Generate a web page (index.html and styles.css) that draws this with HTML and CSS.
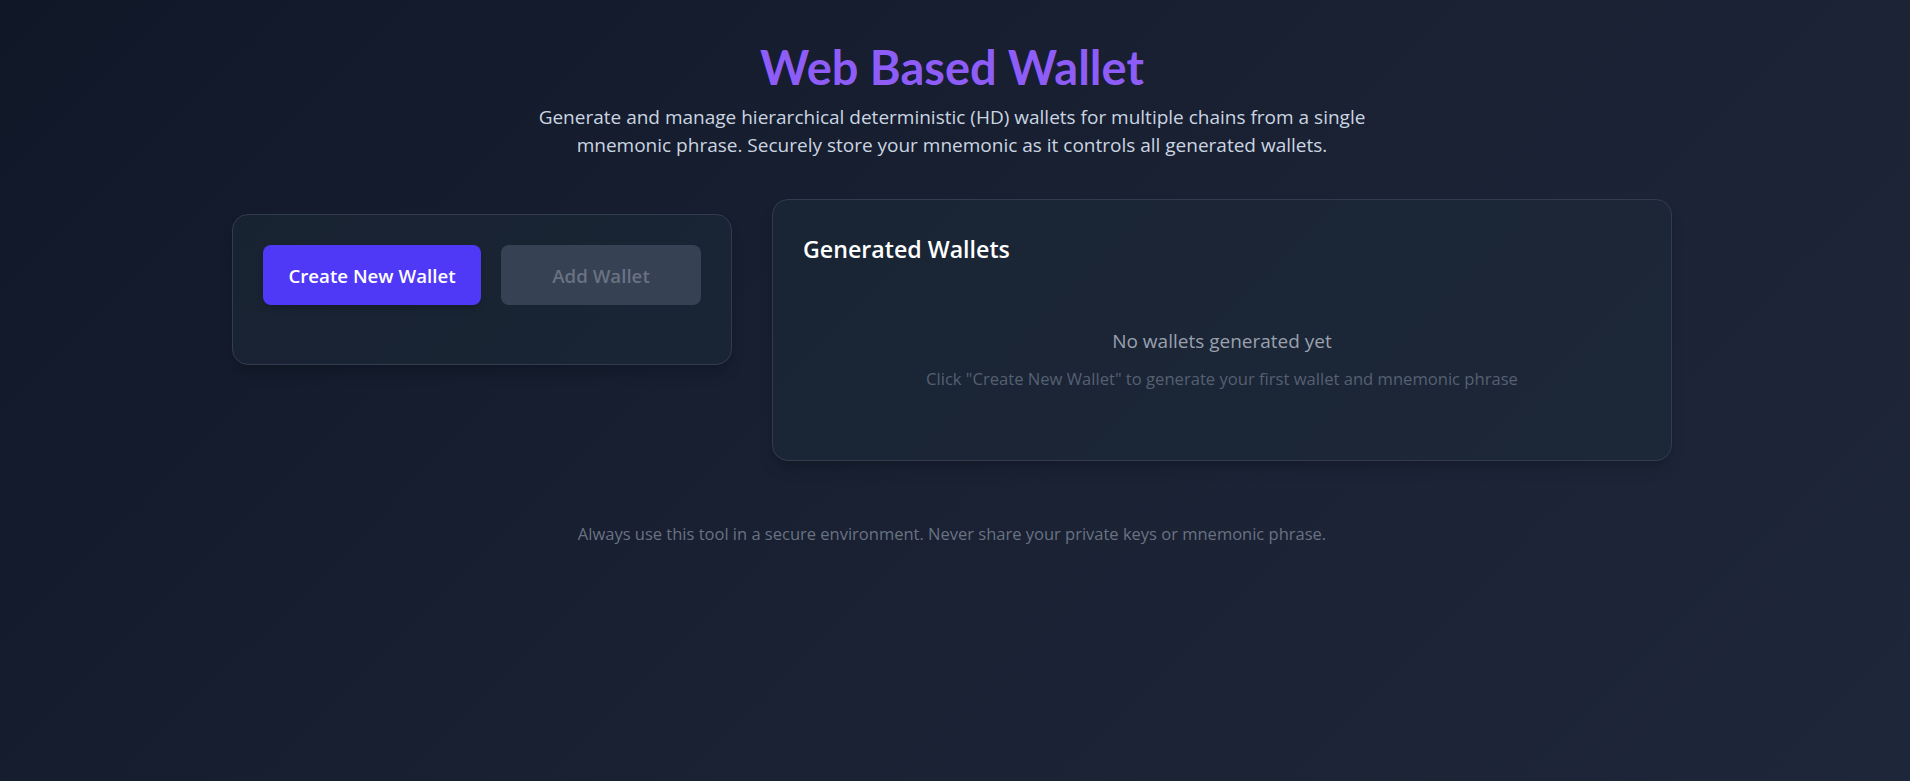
FILE: index.html
```html
<!DOCTYPE html>
<html lang="en">
<head>
    <meta charset="UTF-8">
    <meta name="viewport" content="width=device-width, initial-scale=1.0">
    <title>Web Based Wallet</title>

    <link rel="stylesheet" href="styles.css">
</head>
<body>
<div class="pagina">

    <!-- CABECERA -->
    <header class="cabecera">
        <h1 class="titulo">Web Based Wallet</h1>
        <p class="subtitulo">Generate and manage hierarchical deterministic (HD) wallets for multiple chains from a single mnemonic phrase. Securely store your mnemonic as it controls all generated wallets.</p>
    </header>

    <!-- PANELES -->
    <main class="paneles">
        <section class="tarjeta acciones">
            <div class="botones">
                <button class="boton primario">Create New Wallet</button>
                <button class="boton desactivado" disabled>Add Wallet</button>
            </div>
        </section>

        <section class="tarjeta carteras">
            <h2>Generated Wallets</h2>
            <div class="vacio">
                <p class="vacio-titulo">No wallets generated yet</p>
                <p class="vacio-texto">Click "Create New Wallet" to generate your first wallet and mnemonic phrase</p>
            </div>
        </section>
    </main>

    <!-- PIE -->
    <footer class="pie">
        Always use this tool in a secure environment. Never share your private keys or mnemonic phrase.
    </footer>

</div>
</body>
</html>
```

FILE: styles.css
```css
* {
    box-sizing: border-box;
}

html, body {
    margin: 0;
    height: 100%;
}

body {
    font-family: "Open Sans", "Noto Sans", sans-serif;
    background: linear-gradient(135deg, #101828 0%, #1a2234 60%, #1e2739 100%);
    color: #e5e7eb;
}

.pagina {
    min-height: 100%;
    padding: 43px 6px 40px 0;
    display: flex;
    flex-direction: column;
    align-items: center;
}

.cabecera {
    text-align: center;
}

.titulo {
    margin: 0;
    font-family: Lato, "Open Sans", sans-serif;
    font-size: 47px;
    line-height: 48px;
    font-weight: 700;
    color: #8e5cf7;
}

.subtitulo {
    max-width: 860px;
    margin: 12px auto 0;
    font-size: 19px;
    line-height: 28px;
    color: #cbd5e1;
}

.paneles {
    width: 1440px;
    margin-top: 40px;
    display: flex;
    align-items: flex-start;
    gap: 40px;
}

.tarjeta {
    background-color: rgba(30, 41, 57, 0.55);
    border: 1px solid #323c4e;
    border-radius: 16px;
    box-shadow: 0 10px 15px -3px rgba(0, 0, 0, 0.15), 0 4px 6px -4px rgba(0, 0, 0, 0.15);
}

.acciones {
    width: 500px;
    margin-top: 15px;
    padding: 30px 30px 59px;
}

.botones {
    display: flex;
    gap: 20px;
}

.boton {
    height: 60px;
    border: none;
    border-radius: 8px;
    font-family: inherit;
    font-size: 18.7px;
    font-weight: 600;
    cursor: pointer;
}

.primario {
    width: 218px;
    background-color: #4f39f6;
    color: #ffffff;
    box-shadow: 0 4px 6px -1px rgba(0, 0, 0, 0.2);
}

.desactivado {
    flex: 1;
    background-color: #364153;
    color: #6a7282;
    cursor: not-allowed;
}

.carteras {
    flex: 1;
    padding: 33px 30px 30px;
}

.carteras h2 {
    margin: 0;
    font-size: 23.2px;
    line-height: 32px;
    font-weight: 600;
    color: #ffffff;
}

.vacio {
    padding: 62px 0 39px;
    text-align: center;
}

.vacio-titulo {
    margin: 0;
    font-size: 19px;
    line-height: 28px;
    color: #99a1af;
}

.vacio-texto {
    margin: 12px 0 0;
    font-size: 16.6px;
    line-height: 24px;
    color: #566072;
}

.pie {
    margin-top: 61px;
    font-size: 16.5px;
    line-height: 24px;
    color: #6a7282;
    text-align: center;
}
```
